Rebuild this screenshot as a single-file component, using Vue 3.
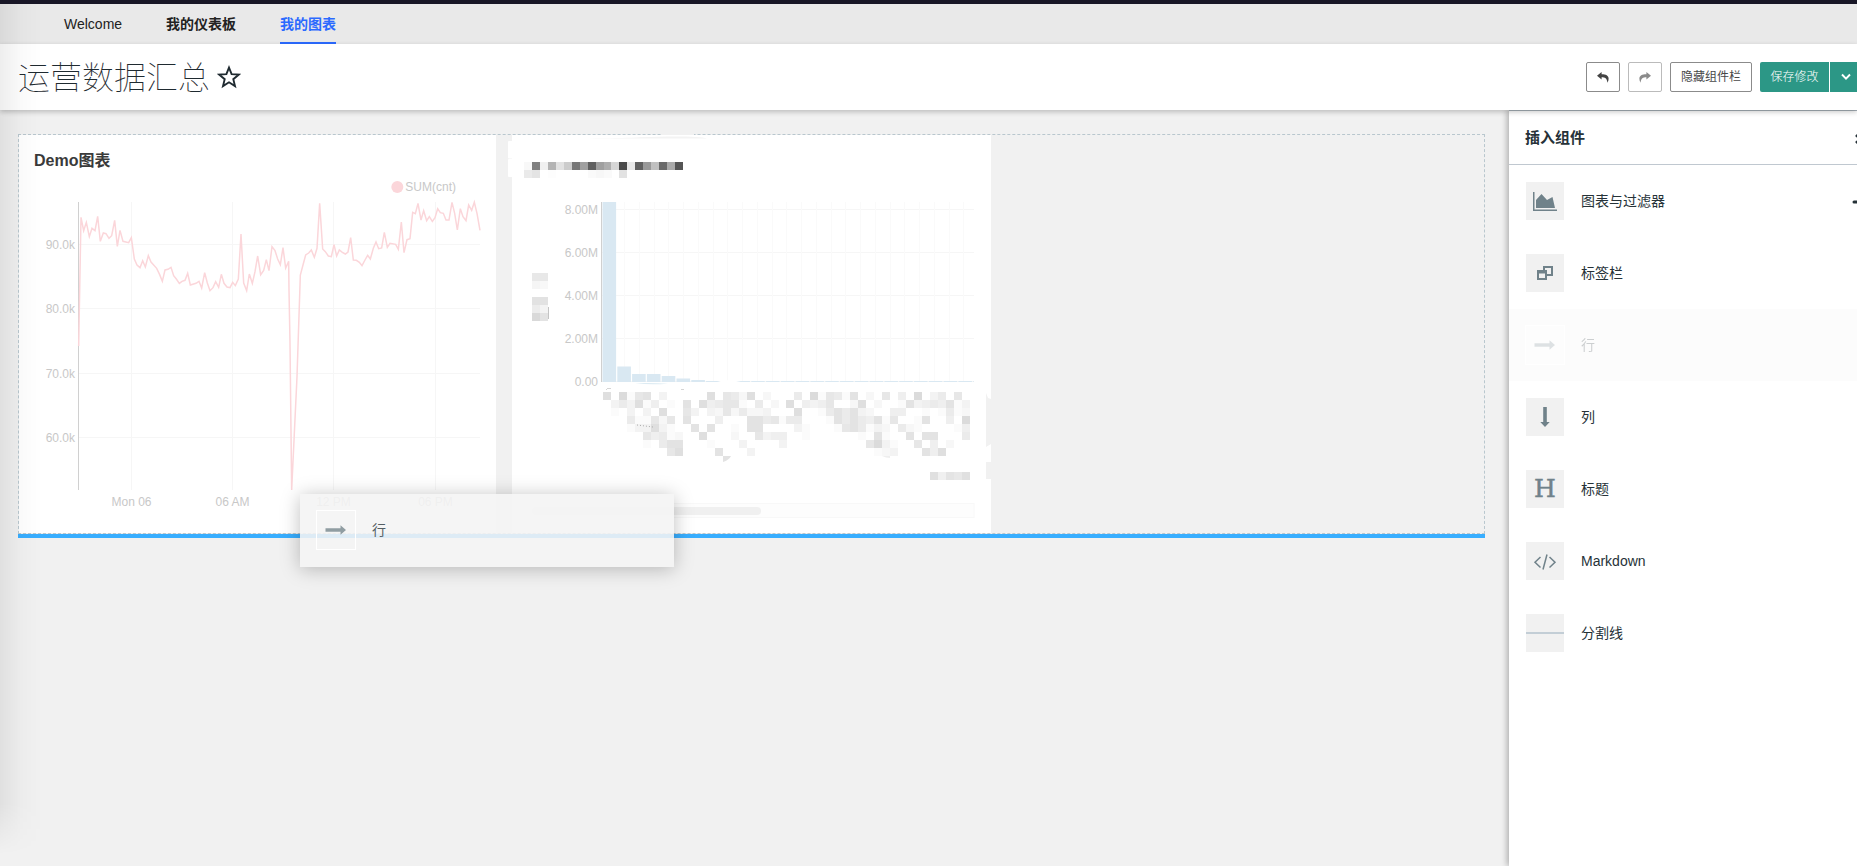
<script setup>
const tabs = [
  { label: 'Welcome' },
  { label: '我的仪表板', bold: true },
  { label: '我的图表', bold: true, active: true },
]

const components = [
  { icon: 'chart', label: '图表与过滤器', more: true },
  { icon: 'tabs', label: '标签栏' },
  { icon: 'row', label: '行', dragging: true },
  { icon: 'column', label: '列' },
  { icon: 'header', label: '标题' },
  { icon: 'code', label: 'Markdown' },
  { icon: 'divider', label: '分割线' },
]

const linePoints =
  '236,648 243,262 251,302 259,277 268,320 276,295 285,302 293,259 301,334 310,309 318,311 327,325 335,317 344,271 352,349 360,301 369,334 386,338 394,323 403,387 411,405 420,413 428,392 436,411 445,377 453,396 470,415 479,434 487,454 495,420 504,418 513,412 521,437 529,447 538,460 546,454 555,451 563,430 571,465 588,460 597,454 605,474 614,428 622,459 630,482 639,473 647,455 656,472 664,433 672,460 681,471 690,473 698,457 706,467 715,447 723,312 731,459 740,482 748,432 757,460 765,425 773,378 782,434 791,421 799,389 807,422 816,350 825,362 833,387 841,404 849,353 857,414 866,394 867,480 870,640 875,1080 891,740 901,435 909,405 917,375 926,369 934,360 943,382 951,355 959,220 968,357 976,365 985,378 994,380 1002,344 1010,378 1018,360 1027,367 1036,372 1044,366 1052,323 1060,390 1069,391 1078,397 1086,407 1095,390 1103,376 1111,387 1120,355 1128,336 1136,356 1145,354 1153,307 1162,352 1170,340 1187,343 1195,358 1204,276 1212,368 1221,329 1230,326 1238,247 1246,251 1254,220 1263,270 1271,242 1280,272 1288,260 1297,274 1305,263 1313,236 1321,248 1330,250 1338,270 1347,270 1356,217 1364,250 1372,300 1381,236 1389,260 1398,272 1406,225 1415,241 1423,217 1431,250 1440,301'

const lineY = [['90.0k', 343.5], ['80.0k', 535.5], ['70.0k', 730.5], ['60.0k', 922.5]]
const lineX = [['Mon 06', 394.5], ['06 AM', 697.5], ['12 PM', 1000.5], ['06 PM', 1306.5]]

const barY = [['8.00M', 209.5], ['6.00M', 252.5], ['4.00M', 295.5], ['2.00M', 338.5], ['0.00', 381.5]]
const barTops = [202, 366.5, 374, 374, 376, 378.5, 380, 381]
const barLines = Array.from({ length: 24 }, (_, i) => Math.round(624 + i * 14.75) + 0.5)
const tinyBars = Array.from({ length: 17 }, (_, i) => 736.5 + i * 14.8)

/* Redaction blocks: each digit is a shade, 0 stays blank. */
const maskRows = [
  '80916 70300 00080 65280 20005 09165 17020 60409 03506 0',
  '03538 14010 70845 66105 02080 43460 02802 00173 45471 3',
  '01030 30800 63032 62522 30008 00157 57320 04400 10151 2',
  '00051 16260 70004 00077 56155 00017 57547 16001 70040 9',
  '00013 38310 07070 01077 00003 10001 67513 20521 00001 4',
  '00000 64512 00800 02006 34400 10000 00107 10070 77000 5',
  '00000 10577 00010 00300 00300 00000 00069 31006 04020 0',
  '00000 00068 00007 00030 00000 00000 00001 23000 74800 0',
].map((r) => r.replaceAll(' ', ''))
const mask = maskRows.flatMap((row, j) =>
  [...row].flatMap((d, i) => {
    const v = 255 - Number(d) * 4
    return d === '0' ? [] : [{ x: 603 + i * 7.978, y: 392 + j * 8, fill: `rgb(${v},${v},${v})` }]
  }),
)
function cells(x, y, shades) {
  return shades.flatMap((s, i) => (s ? [{ x: x + i * 7.95, y, fill: `rgb(${s},${s},${s})` }] : []))
}
const blocks = [
  ...cells(524, 162.4, [248, 128, 240, 180, 226, 204, 119, 160, 96, 160, 174, 214, 74, 232, 96, 153, 192, 106, 170, 85]),
  ...cells(524, 170.4, [234, 228, 0, 253, 0, 0, 0, 0, 250, 247, 250, 0, 226]),
  ...cells(532, 273, [232, 232]),
  ...cells(532, 281, [245, 248]),
  ...cells(532, 297, [226, 226]),
  ...cells(532, 305, [236, 243]),
  ...cells(532, 313, [217, 227]),
  ...cells(930, 471.5, [224, 240, 228, 232, 224]),
  ...mask,
]
</script>

<template>
  <div class="page">
    <div class="topline"></div>
    <nav class="tabs">
      <a v-for="t in tabs" :key="t.label" class="tab" :class="{ bold: t.bold, active: t.active }">{{ t.label }}</a>
    </nav>

    <header class="header">
      <h1 class="title">运营数据汇总</h1>
      <svg class="star" width="24" height="24" viewBox="0 0 24 24">
        <path d="M12 2.6 14.6 9.1 21.7 9.6 16.3 14.2 18 21.1 12 17.3 6 21.1 7.7 14.2 2.3 9.6 9.4 9.1Z" />
      </svg>
      <div class="actions">
        <button class="btn square">
          <svg width="12" height="11" viewBox="0 0 12 11"><path d="M4.6 0 0 3.7 4.6 7.4V5.2C8 5.2 10 6 10.4 10.8 13.4 5 10.6 2.3 4.6 2.3Z" /></svg>
        </button>
        <button class="btn square muted">
          <svg width="12" height="11" viewBox="0 0 12 11"><path d="M7.4 0 12 3.7 7.4 7.4V5.2C4 5.2 2 6 1.6 10.8-1.4 5 1.4 2.3 7.4 2.3Z" /></svg>
        </button>
        <button class="btn wide">隐藏组件栏</button>
        <button class="btn save">保存修改</button>
        <button class="btn drop">
          <svg width="10" height="8" viewBox="0 0 10 8"><path d="M1 1.5 5 5.7 9 1.5" /></svg>
        </button>
      </div>
    </header>

    <div class="body">
      <main class="canvas">
        <section class="row">
          <article class="card line-card">
            <h2 class="card-title">Demo图表</h2>
            <svg width="477" height="358" viewBox="57 135 1431 1074">
              <g class="grid3">
                <line v-for="g in lineY" :key="g[0]" x1="237" x2="1440" :y1="g[1]" :y2="g[1]" />
                <line v-for="g in lineX" :key="g[0]" :x1="g[1]" :x2="g[1]" y1="216" y2="1080" />
              </g>
              <line class="axis3" x1="235.5" x2="235.5" y1="216" y2="1080" />
              <polyline class="series" :points="linePoints" />
              <circle class="dot" cx="1192" cy="171" r="18" />
              <g class="label3">
                <text x="1216" y="183">SUM(cnt)</text>
                <text v-for="g in lineY" :key="g[0]" x="225" :y="g[1] + 12" text-anchor="end">{{ g[0] }}</text>
                <text v-for="g in lineX" :key="g[0]" :x="g[1]" y="1128" text-anchor="middle">{{ g[0] }}</text>
              </g>
            </svg>
          </article>
          <article class="card bar-card">
            <svg width="483" height="398" viewBox="508 135 483 398">
              <rect x="512" y="135" width="479" height="398" fill="#fff" />
              <rect x="508" y="141" width="6" height="17.5" rx="1" fill="#fff" />
              <rect x="508" y="159" width="6" height="18" rx="1" fill="#fff" />
              <path d="M525 138.6C580 138.4 620 138.4 640 137.2 670 136.2 700 136 707 138.6Z" fill="#f3f3f3" />
              <rect x="661" y="134" width="33" height="1" fill="#f1f1f1" />
              <g class="grid">
                <line v-for="g in barY" :key="g[0]" x1="602" x2="974" :y1="g[1]" :y2="g[1]" />
              </g>
              <g class="grid faint">
                <line v-for="x in barLines" :key="x" :x1="x" :x2="x" y1="202" y2="381" />
              </g>
              <g class="bars">
                <rect v-for="(top, i) in barTops" :key="i" :x="602.5 + i * 14.8" :y="top" width="13.6" :height="382 - top" />
                <rect v-for="x in tinyBars" :key="x" :x="x" y="381" :width="Math.min(13.4, 974 - x)" height="1" />
              </g>
              <path d="M717 382Q728 378.5 741 382Z" fill="#fff" />
              <path d="M635 383.3Q650 382.4 668 383.7 650 385 635 383.3" fill="#dcebf3" />
              <line class="axis" x1="601.5" x2="601.5" y1="202" y2="382" />
              <g class="label">
                <text v-for="g in barY" :key="g[0]" x="598" :y="g[1] + 4.3" text-anchor="end">{{ g[0] }}</text>
              </g>
              <g shape-rendering="crispEdges">
                <rect v-for="(b, i) in blocks" :key="i" :x="b.x" :y="b.y" width="8" height="8" :fill="b.fill" />
              </g>
              <path d="M723 456H731Q729 460 723 462Z" fill="#e2e2e2" />
              <path d="M882 456H890V458Q886 458 882 456Z" fill="#eee" />
              <path d="M606 390 608 388M608 388.5H611M681 389.5H684" stroke="#d5d5d5" fill="none" />
              <path d="M637 425 653 427" stroke="#aaa" stroke-dasharray="1 2" fill="none" />
              <rect x="548" y="307" width="1" height="12" fill="#c4c4c4" />
              <rect x="531" y="503.5" width="443" height="14" class="brush" />
              <rect x="532" y="507" width="229" height="8" rx="4" fill="#f0f0f0" />
              <path d="M991 399 988 398 986 393V447L991 444ZM986 462H991V479H986Z" fill="#f1f1f1" />
            </svg>
          </article>
        </section>
        <div class="drop-line"></div>
      </main>

      <aside class="panel">
        <div class="panel-head">
          <span>插入组件</span>
          <svg class="close" width="12" height="12" viewBox="0 0 12 12"><path d="M2 2 10 10M10 2 2 10" /></svg>
        </div>
        <div v-for="c in components" :key="c.icon" class="item" :class="{ dragging: c.dragging }">
          <span class="icon">
            <svg v-if="c.icon === 'chart'" width="38" height="38" viewBox="0 0 38 38">
              <path d="M7 10H8.5V27.5H31V29H7Z" fill="#70828a" />
              <path d="M10 26V18L15.5 12 21 18 26.5 15 29 26Z" fill="#70828a" />
            </svg>
            <svg v-else-if="c.icon === 'tabs'" width="38" height="38" viewBox="0 0 38 38" fill="none" stroke="#70828a" stroke-width="2">
              <path d="M18 16V13H26V21H21" />
              <rect x="12" y="17" width="8" height="8" />
              <path d="M12 18H20" stroke-width="3" />
            </svg>
            <svg v-else-if="c.icon === 'row'" width="38" height="38" viewBox="0 0 38 38"><path d="M8.5 17.3H23.5V14.3L29 19 23.5 23.7V20.7H8.5Z" fill="#70828a" /></svg>
            <svg v-else-if="c.icon === 'column'" width="38" height="38" viewBox="0 0 38 38"><path d="M17.2 9V24H14.3L19 29 23.7 24H20.8V9Z" fill="#70828a" /></svg>
            <span v-else-if="c.icon === 'header'" class="serif">H</span>
            <svg v-else-if="c.icon === 'code'" width="38" height="38" viewBox="0 0 38 38" fill="none" stroke="#70828a" stroke-width="1.5">
              <path d="M14.5 15 9 20.2 14.5 25.5M23.5 15 29 20.2 23.5 25.5M21 12.5 17 27.5" />
            </svg>
            <span v-else class="rule"></span>
          </span>
          <span class="name">{{ c.label }}</span>
          <svg v-if="c.more" class="more" width="14" height="10" viewBox="0 0 14 10"><path d="M2 5H12" /></svg>
        </div>
      </aside>
    </div>

    <div class="ghost">
      <span class="ghost-icon">
        <svg width="38" height="38" viewBox="0 0 38 38"><path d="M8.5 17.3H23.5V14.3L29 19 23.5 23.7V20.7H8.5Z" /></svg>
      </span>
      <span class="ghost-name">行</span>
    </div>
    <div class="edge-shade"></div>
  </div>
</template>

<style>
body {
  margin: 0;
  background: #f1f1f1;
}
</style>

<style scoped>
.page {
  position: relative;
  width: 1857px;
  height: 866px;
  overflow: hidden;
  display: flex;
  flex-direction: column;
  background: #f1f1f1;
  color: #263238;
  font: 14px/20px "Liberation Sans", "Noto Sans CJK SC", sans-serif;
}
.topline {
  height: 4px;
  background: #181626;
}
.tabs {
  height: 40px;
  background: #e9e9e9;
  display: flex;
  gap: 44px;
  padding-left: 64px;
}
.tab {
  height: 40px;
  line-height: 40px;
  box-sizing: border-box;
  color: #222;
}
.tab.bold {
  font-weight: 600;
}
.tab.active {
  color: #2b6aff;
  border-bottom: 2px solid #2b6aff;
}
.header {
  position: relative;
  z-index: 2;
  height: 66px;
  background: #fff;
  display: flex;
  align-items: center;
  box-shadow: 0 2px 5px rgba(0, 0, 0, 0.22);
}
.title {
  margin: 0 0 4px 18px;
  font: 100 32px/40px "Noto Sans CJK SC", sans-serif;
  color: #1f2a30;
}
.star {
  margin-left: 7px;
  fill: none;
  stroke: #1f2a30;
  stroke-width: 1.9;
}
.actions {
  margin-left: auto;
  margin-right: -4px;
  display: flex;
  align-items: center;
}
.btn {
  box-sizing: border-box;
  height: 30px;
  padding: 0;
  margin: 0 0 0 8px;
  border: 1px solid #8b8b8b;
  border-radius: 2px;
  background: #fff;
  color: #484848;
  font: 12px/28px "Liberation Sans", "Noto Sans CJK SC", sans-serif;
  display: flex;
  align-items: center;
  justify-content: center;
}
.square {
  width: 34px;
  fill: #444;
}
.muted {
  border-color: #bbb;
  fill: #8a8a8a;
}
.wide {
  width: 82px;
}
.save {
  width: 69px;
  border: 0;
  border-radius: 2px 0 0 2px;
  background: #2c9786;
  color: #fff;
  font-weight: 300;
}
.drop {
  width: 31px;
  margin-left: 1px;
  border: 0;
  border-radius: 0 2px 2px 0;
  background: #2c9786;
}
.drop path {
  fill: none;
  stroke: #fff;
  stroke-width: 1.9;
}
.body {
  flex: 1;
  display: flex;
}
.canvas {
  flex: 1;
  padding: 24px 24px 0 18px;
}
.row {
  box-sizing: border-box;
  height: 400px;
  border: 1px dashed #b9c7ce;
  display: flex;
}
.card svg {
  display: block;
  overflow: visible;
}
.line-card {
  width: 477px;
  background: #fff;
}
.bar-card {
  margin-left: 12px;
}
.card-title {
  margin: 0;
  height: 25px;
  padding: 15px 0 0 15px;
  font: 600 16px/22px "Liberation Sans", "Noto Sans CJK SC", sans-serif;
  color: #3a3a3a;
}
.grid3 line {
  stroke: #f6f6f6;
  stroke-width: 3;
}
.axis3 {
  stroke: #d0d0d0;
  stroke-width: 3;
}
.series {
  fill: none;
  stroke: #fbd6da;
  stroke-width: 4.5;
}
.dot {
  fill: #fbd6da;
}
.label3 {
  font-size: 36px;
  fill: #c8c8c8;
}
.grid line {
  stroke: #f6f6f6;
}
.faint line {
  stroke: #fafafa;
}
.axis {
  stroke: #d0d0d0;
}
.label {
  font-size: 12px;
  fill: #c8c8c8;
}
.bars {
  fill: #d9e8f2;
}
.brush {
  fill: #fdfdfd;
  stroke: #f8f8f8;
}
.drop-line {
  height: 4px;
  background: #38aeff;
}
.panel {
  width: 348px;
  background: #fff;
  box-shadow: -2px 0 6px rgba(0, 0, 0, 0.28);
}
.panel-head {
  position: relative;
  box-sizing: border-box;
  height: 55px;
  padding-left: 16px;
  border-top: 1px solid #a9b3bb;
  border-bottom: 1px solid #c0c8d0;
  display: flex;
  align-items: center;
  font-size: 15px;
  font-weight: 600;
}
.close {
  position: absolute;
  left: 345px;
  top: 22px;
  fill: none;
  stroke: #263238;
  stroke-width: 2.6;
}
.item {
  position: relative;
  height: 72px;
  padding-left: 17px;
  display: flex;
  align-items: center;
}
.icon {
  width: 38px;
  height: 38px;
  background: #f1f1f1;
  display: flex;
  align-items: center;
  justify-content: center;
}
.name {
  margin-left: 17px;
}
.more {
  position: absolute;
  left: 343px;
  top: 32px;
  stroke: #263238;
  stroke-width: 3;
  stroke-linecap: round;
}
.dragging {
  background: #fcfcfc;
}
.dragging .icon {
  background: #fdfdfd;
  outline: 1px solid #fff;
}
.dragging .icon svg,
.dragging .name {
  opacity: 0.22;
}
.serif {
  font: 400 25px/38px "DejaVu Serif", serif;
  color: #70828a;
  -webkit-text-stroke: 0.5px #70828a;
}
.rule {
  width: 38px;
  height: 2px;
  background: #c3ced6;
}
.ghost {
  position: absolute;
  z-index: 3;
  left: 300px;
  top: 494px;
  width: 374px;
  height: 73px;
  box-sizing: border-box;
  padding: 0 0 2px 16px;
  display: flex;
  align-items: center;
  background: rgba(244, 244, 244, 0.88);
  box-shadow: 0 2px 18px rgba(0, 0, 0, 0.25);
}
.ghost-icon {
  width: 38px;
  height: 38px;
  border: 1px solid #fff;
  fill: #909da2;
}
.ghost-name {
  margin-left: 16px;
  color: #545e63;
}
.edge-shade {
  position: absolute;
  z-index: 4;
  left: 0;
  top: 4px;
  width: 42px;
  height: 850px;
  background: linear-gradient(to right, rgba(0, 0, 0, 0.065), rgba(0, 0, 0, 0.018) 50%, transparent);
  mask-image: linear-gradient(#000 94%, transparent);
}
</style>
